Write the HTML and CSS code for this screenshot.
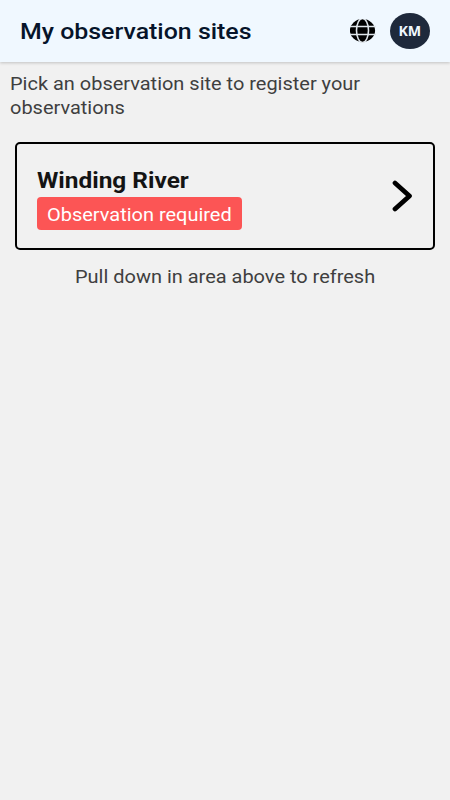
FILE: index.html
```html
<!DOCTYPE html>
<html lang="en">
<head>
<meta charset="utf-8">
<title>My observation sites</title>
<link rel="stylesheet" href="styles.css">
</head>
<body>
<header class="bar">
  <h1 class="title"><span class="fit title-fit">My observation sites</span></h1>
  <svg class="globe" viewBox="0 0 26 24" aria-hidden="true">
    <ellipse cx="12.5" cy="11.5" rx="12.6" ry="11.4"/>
    <g class="lines"><ellipse cx="12.5" cy="11.5" rx="6" ry="12"/><path d="M0 7.5h26M0 15.5h26"/></g>
  </svg>
  <div class="avatar"><span class="initials">KM</span></div>
</header>
<main>
  <p class="intro"><span class="fit">Pick an observation site to register your<br>observations</span></p>
  <section class="card">
    <div class="info">
      <h2 class="name"><span class="fit">Winding River</span></h2>
      <div class="badge"><span class="fit">Observation required</span></div>
    </div>
    <svg class="chevron" viewBox="0 0 21 32" aria-hidden="true"><path d="M3 3l14.5 13L3 29"/></svg>
  </section>
  <p class="hint"><span class="fit">Pull down in area above to refresh</span></p>
</main>
</body>
</html>
```

FILE: styles.css
```css
* { box-sizing: border-box; }
body { margin: 0; height: 800px; overflow: hidden; background: #f1f1f1; color: #3f3f3f; font-family: Roboto, sans-serif; font-size: 18px; }
h1, h2, p { margin: 0; }
.fit { display: inline-block; transform: scaleX(1.109); transform-origin: left; white-space: nowrap; }
.title-fit { transform: scaleX(1.132); }
.bar { height: 62px; display: flex; align-items: center; padding: 0 20px; background: #f0f8ff; box-shadow: 0 1px 3px rgba(0,0,0,.2); }
.title { flex: 1; font-size: 22px; font-weight: 500; color: #06142a; }
.globe { width: 26px; height: 24px; margin-right: 14px; fill: #000; }
.lines { fill: none; stroke: #dfe5ea; stroke-width: 1.6; }
.avatar { width: 40px; height: 36px; border-radius: 50%; background: #1e293b; color: #f0f8ff; font-family: "Noto Sans", sans-serif; font-size: 13.5px; font-weight: 700; display: flex; align-items: center; justify-content: center; }
.initials { transform: scaleX(1.05); }
.intro { padding: 10px; line-height: 24px; }
.card { margin: 12px 15px 0; height: 108px; border: 2px solid #000; border-radius: 5px; padding: 0 20px 0 20.5px; display: flex; align-items: center; justify-content: space-between; }
.info { padding-top: 3px; margin-left: -.1px; }
.name { font-size: 22px; line-height: 30px; padding-bottom: 1px; font-weight: 700; color: #141414; }
.badge { width: 204.5px; height: 33px; border-radius: 4px; background: #fc5555; color: #fff; line-height: 35px; padding-left: 10px; }
.chevron { width: 21px; height: 32px; fill: none; stroke: #000; stroke-width: 4.7; stroke-linecap: round; stroke-linejoin: round; }
.hint { padding: 15px 0 0 75.4px; line-height: 24px; }
```
